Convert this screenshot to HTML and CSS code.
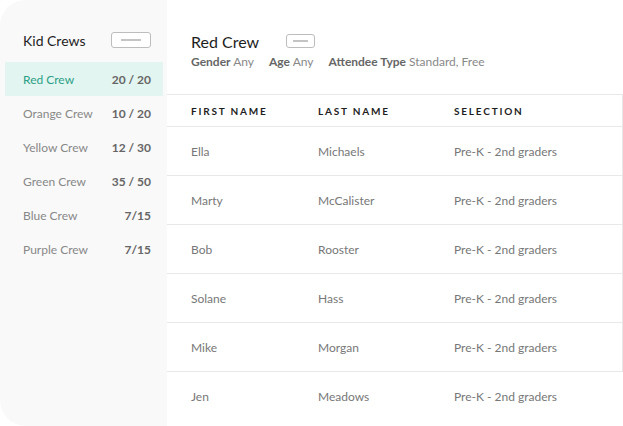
FILE: index.html
```html
<!DOCTYPE html>
<html lang="en">
  <head>
    <meta charset="UTF-8" />
    <meta name="viewport" content="width=device-width, initial-scale=1.0" />
    <title>Kid Crews</title>
    <link rel="stylesheet" href="styles.css">
  </head>
  <body>
    <!-- Sidebar: crew list -->
    <div id="sidebar">
        <div class="side-header">
            <span class="side-title">Kid Crews</span>
            <button class="dash-button"><span class="dash"></span></button>
        </div>
        <ul class="crew-list">
            <li class="crew-item active"><span>Red Crew</span><span class="count">20 / 20</span></li>
            <li class="crew-item"><span>Orange Crew</span><span class="count">10 / 20</span></li>
            <li class="crew-item"><span>Yellow Crew</span><span class="count">12 / 30</span></li>
            <li class="crew-item"><span>Green Crew</span><span class="count">35 / 50</span></li>
            <li class="crew-item"><span>Blue Crew</span><span class="count">7/15</span></li>
            <li class="crew-item"><span>Purple Crew</span><span class="count">7/15</span></li>
        </ul>
    </div>

    <!-- Main: selected crew -->
    <div id="main">
        <div class="crew-head">
            <div class="title-row">
                <span class="crew-title">Red Crew</span>
                <button class="dash-button small"><span class="dash"></span></button>
            </div>
            <div class="filters">
                <span><b>Gender</b> Any</span>
                <span><b>Age</b> Any</span>
                <span><b>Attendee Type</b> Standard, Free</span>
            </div>
        </div>

        <div class="roster">
            <div class="row head"><span>First Name</span><span>Last Name</span><span>Selection</span></div>
            <div class="row"><span>Ella</span><span>Michaels</span><span>Pre-K - 2nd graders</span></div>
            <div class="row"><span>Marty</span><span>McCalister</span><span>Pre-K - 2nd graders</span></div>
            <div class="row"><span>Bob</span><span>Rooster</span><span>Pre-K - 2nd graders</span></div>
            <div class="row"><span>Solane</span><span>Hass</span><span>Pre-K - 2nd graders</span></div>
            <div class="row"><span>Mike</span><span>Morgan</span><span>Pre-K - 2nd graders</span></div>
            <div class="row last"><span>Jen</span><span>Meadows</span><span>Pre-K - 2nd graders</span></div>
        </div>
    </div>
  </body>
</html>
```

FILE: styles.css
```css
/* Page */
body { margin: 0; height: 426px; overflow: hidden; display: flex; background-color: #fff; font-family: Lato, "Open Sans", sans-serif; color: #222; }
button { font-family: inherit; }

/* Small outlined dash button */
.dash-button { display: flex; align-items: center; justify-content: center; width: 40px; height: 16px; padding: 0; background-color: #fff; border: 1px solid #bdbdbd; border-radius: 3px; }
.dash-button .dash { display: block; width: 20px; height: 2px; background-color: #c4c4c4; }
.dash-button.small { width: 29px; height: 14px; }
.dash-button.small .dash { width: 15px; }

/* Sidebar */
#sidebar { width: 167px; flex-shrink: 0; background-color: #f9f9f9; border-radius: 26px 0 0 26px; padding-top: 32px; box-sizing: border-box; }
.side-header { display: flex; justify-content: space-between; align-items: center; height: 16px; padding: 0 16px 0 23px; margin-bottom: 14px; }
.side-title { font-size: 14px; color: #1e1e1e; }
.crew-list { list-style: none; margin: 0 4px 0 5px; padding: 0; }
.crew-item { display: flex; justify-content: space-between; align-items: center; height: 34px; padding: 0 12px 0 18px; font-size: 12px; color: #888; }
.crew-item .count { font-weight: bold; color: #666; }
.crew-item.active { background-color: #e3f5f0; color: #2b9f86; }

/* Main */
#main { flex: 1; padding-top: 31px; }
.crew-head { padding-left: 24px; margin-bottom: 24px; }
.title-row { display: flex; align-items: center; gap: 27px; height: 20px; margin-bottom: 3px; }
.crew-title { font-size: 16px; color: #1e1e1e; }
.filters { display: flex; gap: 15px; font-size: 12px; line-height: 16px; color: #888; }
.filters b { color: #666; }

/* Roster table */
.roster { border-top: 1px solid #e8e8e8; }
.row { display: grid; grid-template-columns: 127px 136px 1fr; align-items: center; height: 48px; padding-left: 24px; border-bottom: 1px solid #e8e8e8; border-right: 1px solid #e8e8e8; font-size: 12px; color: #777; }
.row.head { height: 31px; font-size: 10px; font-weight: bold; letter-spacing: 1.8px; text-transform: uppercase; color: #1e1e1e; }
.row.last { border: none; }
```
